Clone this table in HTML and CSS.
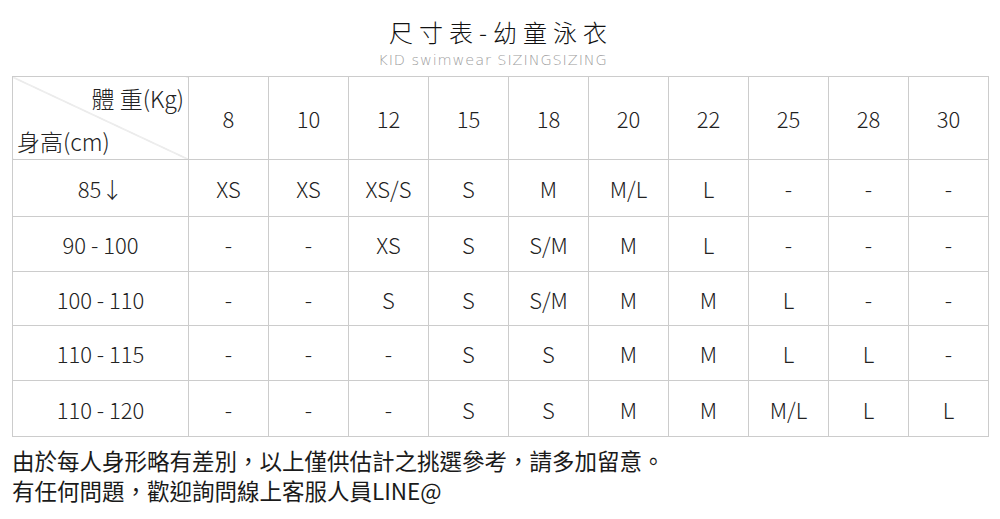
FILE: index.html
```html
<!DOCTYPE html>
<html lang="zh-Hant">
<head>
<meta charset="utf-8">
<title>尺寸表-幼童泳衣</title>
<link rel="stylesheet" href="styles.css">
</head>
<body>
<div class="page">
  <header class="heading">
    <h1 class="title">尺寸表-幼童泳衣</h1>
    <p class="subtitle">KID swimwear SIZINGSIZING</p>
  </header>
  <table class="chart">
    <colgroup>
      <col class="col-label">
      <col span="10" class="col-data">
    </colgroup>
    <thead>
      <tr class="row-head">
        <th class="corner">
          <span class="corner-top">體 重(Kg)</span>
          <span class="corner-bottom">身高(cm)</span>
        </th>
        <th>8</th><th>10</th><th>12</th><th>15</th><th>18</th><th>20</th><th>22</th><th>25</th><th>28</th><th>30</th>
      </tr>
    </thead>
    <tbody>
      <tr class="r1"><td>85↓</td><td>XS</td><td>XS</td><td>XS/S</td><td>S</td><td>M</td><td>M/L</td><td>L</td><td>-</td><td>-</td><td>-</td></tr>
      <tr class="r2"><td>90 - 100</td><td>-</td><td>-</td><td>XS</td><td>S</td><td>S/M</td><td>M</td><td>L</td><td>-</td><td>-</td><td>-</td></tr>
      <tr class="r3"><td>100 - 110</td><td>-</td><td>-</td><td>S</td><td>S</td><td>S/M</td><td>M</td><td>M</td><td>L</td><td>-</td><td>-</td></tr>
      <tr class="r4"><td>110 - 115</td><td>-</td><td>-</td><td>-</td><td>S</td><td>S</td><td>M</td><td>M</td><td>L</td><td>L</td><td>-</td></tr>
      <tr class="r5"><td>110 - 120</td><td>-</td><td>-</td><td>-</td><td>S</td><td>S</td><td>M</td><td>M</td><td>M/L</td><td>L</td><td>L</td></tr>
    </tbody>
  </table>
  <div class="notes">
    <p>由於每人身形略有差別，以上僅供估計之挑選參考，請多加留意。</p>
    <p>有任何問題，歡迎詢問線上客服人員LINE@</p>
  </div>
</div>
</body>
</html>
```

FILE: styles.css
```css
html, body {
  margin: 0;
  padding: 0;
  background: #ffffff;
}

.page {
  width: 1000px;
  font-family: "Noto Sans CJK TC", "Noto Sans", sans-serif;
  font-weight: 300;
  color: #222222;
}

.heading {
  text-align: center;
  padding-top: 15px;
}

.title {
  margin: 0;
  font-size: 24px;
  font-weight: 300;
  line-height: 34px;
  letter-spacing: 6px;
  color: #111111;
  padding-left: 2px;
}

.subtitle {
  margin: 0;
  font-family: "DejaVu Sans", "Lato", sans-serif;
  font-size: 14.5px;
  font-weight: 200;
  line-height: 22px;
  letter-spacing: 0.9px;
  color: #a0a0a0;
  padding-right: 14px;
}

.chart {
  margin: 5px 0 0 12px;
  border-collapse: collapse;
  table-layout: fixed;
  width: 975px;
}

.col-label { width: 176px; }
.col-data { width: 80px; }

.chart th,
.chart td {
  border: 1px solid #cccccc;
  padding: 0;
  text-align: center;
  vertical-align: middle;
  font-weight: 300;
  font-size: 22px;
  color: #222222;
}

.row-head { height: 83px; }
.r1 { height: 57px; }
.r2 { height: 55px; }
.r3 { height: 54px; }
.r4 { height: 55px; }
.r5 { height: 56px; }

.chart .corner {
  background: linear-gradient(to top right, transparent calc(50% - 0.7px), #cfcfcf 50%, transparent calc(50% + 0.7px));
  padding: 6px 4px 0 4px;
  font-size: 23px;
  line-height: 28px;
}

.corner-top {
  display: block;
  text-align: right;
  margin-top: -4px;
}

.corner-bottom {
  display: block;
  text-align: left;
  margin-top: 15px;
}

.notes {
  padding: 8px 0 0 12px;
  font-family: "Noto Sans CJK TC", sans-serif;
  font-weight: 400;
  font-size: 22.5px;
  line-height: 30px;
  color: #1a1a1a;
}

.notes p {
  margin: 0;
}
```
